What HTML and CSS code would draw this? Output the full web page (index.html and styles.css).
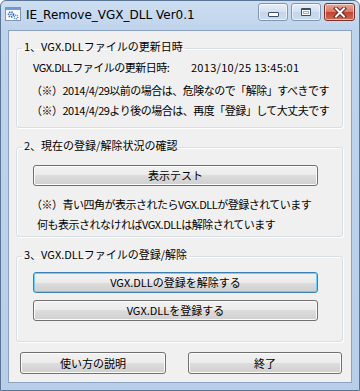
FILE: index.html
```html
<!DOCTYPE html>
<html lang="ja">
<head>
    <meta charset="UTF-8">
    <meta name="viewport" content="width=device-width, initial-scale=1.0">
    <title>IE_Remove_VGX_DLL Ver0.1</title>
    <link rel="stylesheet" href="styles.css">
</head>
<body>
    <div class="window">
        <div class="titlebar">
            <svg class="app-icon" width="16" height="16" viewBox="0 0 16 16">
                <rect x="0.5" y="1.5" width="15" height="13" fill="#fdfdfd" stroke="#8194ad"/>
                <rect x="1" y="2" width="14" height="2" fill="#6f9ad3"/>
                <circle cx="6" cy="8.5" r="2.4" fill="none" stroke="#3b72c2" stroke-width="1.8" stroke-dasharray="1.3 0.8"/>
                <circle cx="6" cy="8.5" r="0.8" fill="#3b72c2"/>
                <circle cx="11" cy="11" r="1.8" fill="none" stroke="#4f86cf" stroke-width="1.4" stroke-dasharray="1 0.7"/>
            </svg>
            <span class="title">IE_Remove_VGX_DLL Ver0.1</span>
            <div class="caption-buttons">
                <span class="cap-btn cap-min"><i></i></span>
                <span class="cap-btn cap-max"><i></i></span>
                <span class="cap-btn cap-close">
                    <svg width="14" height="11" viewBox="0 0 14 11">
                        <path d="M3 1.5 L11 9.5 M11 1.5 L3 9.5" stroke="#5a2a24" stroke-width="4" stroke-linecap="square"/>
                        <path d="M3 1.5 L11 9.5 M11 1.5 L3 9.5" stroke="#fff" stroke-width="2" stroke-linecap="square"/>
                    </svg>
                </span>
            </div>
        </div>

        <div class="client">
            <fieldset class="group group-date">
                <legend>1、VGX.DLLファイルの更新日時</legend>
                <div class="row row-date">
                    <span class="label">VGX.DLLファイルの更新日時:</span>
                    <span class="date">2013/10/25 13:45:01</span>
                </div>
                <div class="row note">（※）2014/4/29以前の場合は、危険なので「解除」すべきです</div>
                <div class="row note">（※）2014/4/29より後の場合は、再度「登録」して大丈夫です</div>
            </fieldset>

            <fieldset class="group group-check">
                <legend>2、現在の登録/解除状況の確認</legend>
                <button class="btn">表示テスト</button>
                <div class="row note check-note">（※）青い四角が表示されたらVGX.DLLが登録されています</div>
                <div class="row note indent">何も表示されなければVGX.DLLは解除されています</div>
            </fieldset>

            <fieldset class="group group-reg">
                <legend>3、VGX.DLLファイルの登録/解除</legend>
                <button class="btn btn-default">VGX.DLLの登録を解除する</button>
                <button class="btn btn-second">VGX.DLLを登録する</button>
            </fieldset>

            <div class="footer">
                <button class="btn btn-help">使い方の説明</button>
                <button class="btn btn-exit">終了</button>
            </div>
        </div>
    </div>
</body>
</html>
```

FILE: styles.css
```css
* {
    margin: 0;
    padding: 0;
    box-sizing: border-box;
}

body {
    width: 360px;
    height: 391px;
    background: #fff;
    font-family: "Noto Sans CJK JP", "Noto Sans", sans-serif;
    font-size: 11px;
    color: #000;
}

.window {
    width: 360px;
    height: 391px;
    display: flex;
    flex-direction: column;
    border: 1px solid #5d7594;
    border-radius: 6px 6px 0 0;
    background: linear-gradient(180deg, #cddef1 0, #bed3ec 30px, #b9cfe9 100%);
}

/* title bar */
.titlebar {
    height: 29px;
    display: flex;
    align-items: flex-start;
    padding: 0 4px;
}

.app-icon {
    margin-top: 5px;
    flex-shrink: 0;
}

.title {
    margin: 6px 0 0 5px;
    font-family: "DejaVu Sans", sans-serif;
    font-size: 12px;
    line-height: 16px;
    color: #000;
    flex: 1;
}

.caption-buttons {
    display: flex;
    gap: 3px;
    margin-top: 2px;
}

.cap-btn {
    height: 18px;
    width: 30px;
    border: 1px solid #8196b3;
    border-radius: 3px;
    background: linear-gradient(180deg, #e6eef8 0, #d3e0f0 50%, #c4d5ea 50%, #ccdcee 100%);
    box-shadow: inset 0 0 0 1px rgba(255, 255, 255, 0.6);
    display: flex;
    align-items: center;
    justify-content: center;
}

.cap-min i {
    display: block;
    width: 11px;
    height: 5px;
    margin-top: 5px;
    border: 1px solid #3d4e66;
    border-radius: 1px;
    background: #fff;
}

.cap-max i {
    display: block;
    width: 10px;
    height: 8px;
    border: 1px solid #3d4e66;
    border-top-width: 2px;
    border-radius: 1px;
    background: #fff;
    box-shadow: inset 0 0 0 1px #fff, inset 0 0 0 2px #9fb0c6;
}

.cap-close {
    width: 31px;
    border-color: #7b3128;
    background: linear-gradient(180deg, #e9a99a 0, #d7786a 50%, #c2412f 50%, #cf6a55 100%);
}

/* client area */
.client {
    flex: 1;
    margin: 0 7px 7px;
    border: 1px solid #8ba2c0;
    background: #f0f0f0;
    padding: 7px 8px 0 7px;
    display: flex;
    flex-direction: column;
}

.group {
    border: 1px solid #d5dfe5;
    border-radius: 3px;
    box-shadow: inset 1px 1px 0 #fff, 1px 1px 0 #fff;
    padding: 0 24px 0 16px;
    min-width: 0;
}

.group legend {
    margin-left: -11px;
    padding: 0 2px 4px;
    line-height: 16px;
}

.row {
    line-height: 20px;
    white-space: nowrap;
    letter-spacing: -0.5px;
}

.row-date {
    line-height: 18px;
    margin-bottom: 4px;
}

.label {
    display: inline-block;
    width: 156px;
}

.date {
    letter-spacing: 0.3px;
}

.note {
    margin-left: -2px;
}

.group-date {
    padding-bottom: 7px;
}

.group-check {
    margin-top: 9px;
    padding-bottom: 2px;
}

.check-note {
    margin-top: 8px;
}

.indent {
    margin-left: 4px;
}

.group-reg {
    margin-top: 9px;
    padding-bottom: 20px;
}

/* buttons */
.btn {
    display: block;
    width: 100%;
    height: 21px;
    border: 1px solid #707070;
    border-radius: 3px;
    background: linear-gradient(180deg, #f2f2f2 0, #ebebeb 50%, #dddddd 50%, #cfcfcf 100%);
    box-shadow: inset 0 0 0 1px #fbfbfb;
    font-family: inherit;
    font-size: 11px;
    line-height: 19px;
    color: #000;
    text-align: center;
}

.group-check .btn {
    margin-top: 8px;
}

.btn-default {
    margin-top: 6px;
    border-color: #3c7fb1;
    box-shadow: inset 0 0 0 1px #6fd0f8;
}

.btn-second {
    margin-top: 7px;
}

.footer {
    display: flex;
    gap: 22px;
    margin-top: 10px;
    padding-left: 4px;
}

.footer .btn {
    height: 22px;
    line-height: 20px;
}

.btn-help {
    width: 146px;
}

.btn-exit {
    width: 154px;
}
```
